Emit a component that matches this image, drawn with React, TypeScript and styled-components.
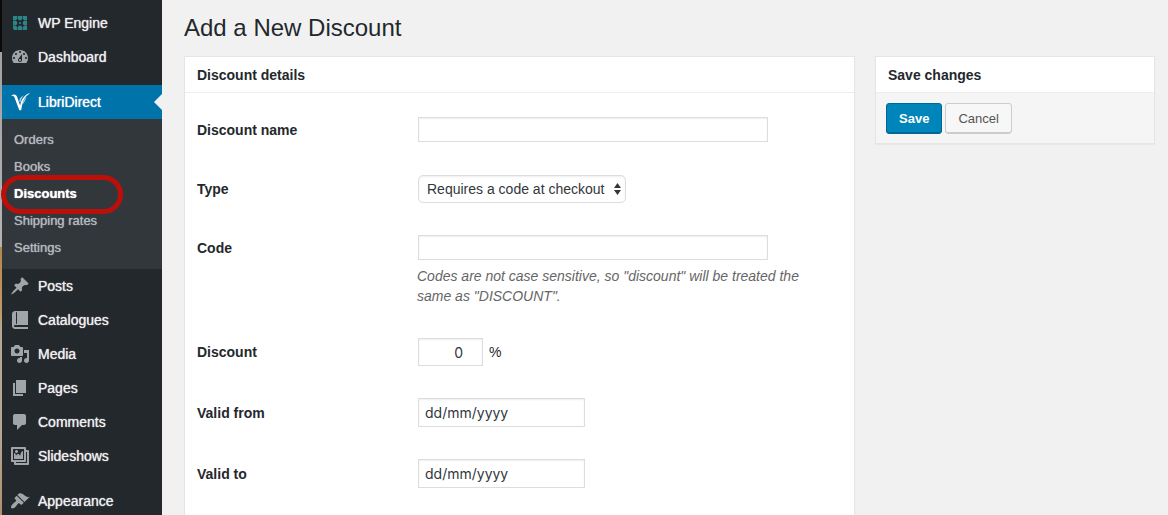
import React from 'react';
import styled, { createGlobalStyle } from 'styled-components';

const GlobalStyle = createGlobalStyle`
  *, *::before, *::after { box-sizing: border-box; }
  body {
    margin: 0;
    background: #f1f1f1;
    color: #23282d;
    font: 14px/20px "Liberation Sans", Arial, sans-serif;
  }
`;

const Shell = styled.div`
  display: flex;
  min-height: 100vh;
`;

const Backdrop = styled.div`
  flex: none;
  width: 2px;
  background: linear-gradient(#0a0a0a 52px, #a2a2a2 52px, #b4b4b4 247px, #b08850 247px, #c09a62 310px, #b5a893 330px, #b5a893 430px, #b09070 515px);
`;

const Sidebar = styled.nav`
  flex: none;
  width: 160px;
  padding-top: 6px;
  background: #23282d;
`;

const Menu = styled.ul`
  margin: 0;
  padding: 0;
  list-style: none;
`;

const MenuEntry = styled.li<{ $spaced?: boolean }>`
  margin-top: ${(p) => (p.$spaced ? 11 : 0)}px;
`;

const MenuLink = styled.a<{ $current?: boolean }>`
  position: relative;
  display: flex;
  align-items: center;
  gap: 8px;
  height: 34px;
  padding-left: 8px;
  color: ${(p) => (p.$current ? '#fff' : '#eee')};
  background: ${(p) => (p.$current ? '#0073aa' : 'transparent')};
  text-decoration: none;
  text-shadow: 0 0 1px currentColor;

  &::after {
    content: '';
    display: ${(p) => (p.$current ? 'block' : 'none')};
    position: absolute;
    right: 0;
    top: 9px;
    border: 8px solid transparent;
    border-right-color: #f1f1f1;
    border-left-width: 0;
  }
`;

const Icon = styled.svg`
  flex: none;
  width: 20px;
  height: 20px;
  fill: #a0a5aa;
`;

const Submenu = styled.ul`
  margin: 0;
  padding: 7px 0 8px;
  list-style: none;
  background: #32373c;
`;

const SubmenuEntry = styled.li`
  position: relative;
`;

const SubmenuLink = styled.a<{ $current?: boolean }>`
  display: block;
  padding-left: 12px;
  font-size: 13px;
  line-height: 27px;
  font-weight: ${(p) => (p.$current ? 700 : 400)};
  color: ${(p) => (p.$current ? '#fff' : '#b4b9be')};
  text-decoration: none;
  text-shadow: 0 0 1px currentColor;
`;

const Highlight = styled.span`
  position: absolute;
  z-index: 1;
  left: -1px;
  top: -5px;
  width: 122px;
  height: 39px;
  border: 5px solid #bb0f0a;
  border-radius: 20px;
  pointer-events: none;
`;

const Page = styled.main`
  flex: 1;
  min-width: 0;
  padding: 13px 13px 0 22px;
`;

const Title = styled.h1`
  margin: 0 0 13px;
  font-size: 24px;
  line-height: 30px;
  font-weight: 400;
`;

const Columns = styled.div`
  display: flex;
  align-items: flex-start;
  gap: 20px;
`;

const Card = styled.section<{ $side?: boolean }>`
  flex: ${(p) => (p.$side ? '0 0 280px' : '1 1 0')};
  min-width: 0;
  border: 1px solid #e5e5e5;
  background: #fff;
  box-shadow: 0 1px 1px rgba(0, 0, 0, 0.04);
`;

const CardTitle = styled.h2`
  margin: 0;
  padding: 8px 12px 7px;
  border-bottom: 1px solid #eee;
  font-size: 14px;
  line-height: 20px;
  font-weight: 700;
`;

const Form = styled.form`
  display: grid;
  gap: 32px;
  padding: 24px 12px 32px;
`;

const Row = styled.div`
  display: grid;
  grid-template-columns: 221px minmax(0, 1fr);
  align-items: center;
`;

const Label = styled.label`
  font-weight: 700;
`;

const Control = styled.div`
  display: flex;
  align-items: flex-start;
  gap: 6px;
  min-height: 26px;
`;

const Unit = styled.span`
  line-height: 28px;
`;

const TextInput = styled.input`
  width: 100%;
  max-width: 350px;
  height: 25px;
  padding: 3px 5px;
  border: 1px solid #ddd;
  background: #fff;
  box-shadow: inset 0 1px 2px rgba(0, 0, 0, 0.07);
  color: #32373c;
  font: 14px "Liberation Sans", Arial, sans-serif;
`;

const NumberInput = styled(TextInput)`
  width: 65px;
  height: 28px;
  padding-right: 19px;
  text-align: right;
  font-family: Inter, sans-serif;
`;

const DateInput = styled(TextInput)`
  width: 167px;
  height: 29px;
  padding: 3px 6px;
  font-family: Inter, sans-serif;

  &::placeholder {
    color: #32373c;
    opacity: 1;
  }
`;

const SelectBox = styled.div`
  position: relative;
  display: flex;
`;

const Select = styled.select`
  appearance: none;
  width: 208px;
  height: 28px;
  padding: 0 16px 0 8px;
  border: 1px solid #ddd;
  border-radius: 5px;
  background: #fff;
  box-shadow: inset 0 1px 2px rgba(0, 0, 0, 0.07);
  color: #32373c;
  font: 14px "Liberation Sans", Arial, sans-serif;
`;

const SelectArrows = styled.svg`
  position: absolute;
  right: 5px;
  top: 8px;
  width: 7px;
  height: 12px;
  fill: #32373c;
  pointer-events: none;
`;

const Description = styled.p`
  grid-column: 2;
  max-width: 420px;
  margin: 5px 0 0 -1px;
  color: #666;
  font-style: italic;
`;

const Actions = styled.div`
  display: flex;
  gap: 3px;
  padding: 10px 10px 9px;
  background: #f5f5f5;
`;

const Button = styled.button<{ $primary?: boolean }>`
  height: 31px;
  padding: 0 12px;
  border: 1px solid ${(p) => (p.$primary ? '#006799' : '#ccc')};
  border-radius: 3px;
  background: ${(p) => (p.$primary ? '#0085ba' : '#f7f7f7')};
  box-shadow: inset 0 -1px 0 ${(p) => (p.$primary ? '#006799' : '#ccc')};
  color: ${(p) => (p.$primary ? '#fff' : '#555')};
  font: ${(p) => (p.$primary ? 700 : 400)} 13px "Liberation Sans", Arial, sans-serif;
`;

const glyphs: Record<string, React.ReactNode> = {
  engine: (
    <g fill="#2b8488">
      <path d="M3 3h4.2v3L6 7.2H3zM7.8 3h4.4v3L11 7.2H9L7.8 6zM12.8 3H17v4.2h-3L12.8 6zM3 7.8h3L7.2 9v2L6 12.2H3zM17 7.8h-3L12.8 9v2l1.2 1.2h3zM3 12.8h3L7.2 14v3H4.2L3 15.8zM9 12.8h2l1.2 1.2v3H7.8v-3zM14 12.8h3V17h-4.2v-3z" />
      <circle cx="10" cy="10" r="1.1" />
    </g>
  ),
  dashboard: (
    <path d="M3.76 16h12.48c1.1-1.37 1.76-3.11 1.76-5 0-4.42-3.58-8-8-8s-8 3.58-8 8c0 1.89.66 3.63 1.76 5zM10 4c.55 0 1 .45 1 1s-.45 1-1 1-1-.45-1-1 .45-1 1-1zM6 6c.55 0 1 .45 1 1s-.45 1-1 1-1-.45-1-1 .45-1 1-1zm8 0c.55 0 1 .45 1 1s-.45 1-1 1-1-.45-1-1 .45-1 1-1zm-5.37 5.55L12 7v6c0 1.1-.9 2-2 2s-2-.9-2-2c0-.57.24-1.08.63-1.45zM4 10c.55 0 1 .45 1 1s-.45 1-1 1-1-.45-1-1 .45-1 1-1zm12 0c.55 0 1 .45 1 1s-.45 1-1 1-1-.45-1-1 .45-1 1-1zm-5 3c0-.55-.45-1-1-1s-1 .45-1 1 .45 1 1 1 1-.45 1-1z" />
  ),
  libri: (
    <g fill="#fff">
      <path d="M.8 4.2C2.6 1.8 6 1.6 7.2 5l2.9 8.6C11 9 13.500 3 19.600 1c-.4 1-.9 1.500-1.800 2-3.800 2.400-5.400 7.500-6.600 15.200H9.300L4.800 6.200C4 4 2.600 3.300.8 4.200z" />
      <path d="M9.200 9.500c.3-2.700 1.800-5 4.600-6.300-1.800 2-2.900 4-3.500 7.300z" opacity=".75" />
      <path d="M12.500 12.500c.5-3 1.700-5.800 4-8-.6 3.300-1.900 5.600-4 8z" opacity=".6" />
    </g>
  ),
  posts: (
    <path d="M10.44 3.02l1.82-1.82 6.36 6.35-1.83 1.82c-1.05-.68-2.48-.57-3.41.36l-.75.75c-.92.93-1.04 2.35-.35 3.41l-1.83 1.82-2.41-2.41-2.8 2.79c-.42.42-3.38 2.71-3.8 2.29s1.86-3.39 2.28-3.81l2.79-2.79L4.1 9.36l1.83-1.82c1.05.69 2.48.57 3.4-.36l.75-.75c.93-.92 1.05-2.35.36-3.41z" />
  ),
  catalogues: (
    <path d="M5 17h13v2H5c-1.66 0-3-1.34-3-3V4c0-1.66 1.34-3 3-3h13v14H5c-.55 0-1 .45-1 1s.45 1 1 1zm2-3.5v-11c0-.28-.22-.5-.5-.5s-.5.22-.5.5v11c0 .28.22.5.5.5s.5-.22.5-.5z" />
  ),
  media: (
    <path d="M13 11V4c0-.55-.45-1-1-1h-1.67L9 1H5L3.67 3H2c-.55 0-1 .45-1 1v7c0 .55.45 1 1 1h10c.55 0 1-.45 1-1zM7 4.5c1.38 0 2.5 1.12 2.5 2.5S8.38 9.5 7 9.5 4.5 8.38 4.5 7 5.62 4.5 7 4.5zM14 6h5v10.5c0 1.38-1.12 2.5-2.5 2.5S14 17.88 14 16.5s1.12-2.5 2.5-2.5c.17 0 .34.02.5.05V9h-3V6zm-4 8.05V13h2v3.5c0 1.38-1.12 2.5-2.5 2.5S7 17.88 7 16.5 8.12 14 9.5 14c.17 0 .34.02.5.05z" />
  ),
  pages: <path d="M6 15V2h10v13H6zm-1 1h8v2H3V5h2v11z" />,
  comments: (
    <path d="M5 2h9c1.1 0 2 .9 2 2v7c0 1.1-.9 2-2 2h-2l-5 5v-5H5c-1.1 0-2-.9-2-2V4c0-1.1.9-2 2-2z" />
  ),
  slideshows: (
    <path d="M16 4h1.96c.57 0 1.04.47 1.04 1.04v12.92c0 .57-.47 1.04-1.04 1.04H5.04C4.47 19 4 18.53 4 17.96V16H2.04C1.47 16 1 15.53 1 14.96V2.04C1 1.47 1.47 1 2.04 1h12.92c.57 0 1.04.47 1.04 1.04V4zM3 14h11V3H3v11zm5-8.5C8 4.67 7.33 4 6.5 4S5 4.67 5 5.5 5.67 7 6.5 7 8 6.33 8 5.5zm2 4.5s1-5 3-5v8H4V7c2 0 2 3 2 3s.33-2 2-2 2 2 2 2zm7 7V6h-1v8.96c0 .57-.47 1.04-1.04 1.04H6v1h11z" />
  ),
  appearance: (
    <path d="M14.48 11.06L7.41 3.99l1.5-1.5c.5-.56 2.3-.47 3.51.32 1.21.8 1.43 1.28 2.91 2.1 1.18.64 2.45 1.26 4.45.85zm-.71.71L6.7 4.7 4.93 6.47c-.39.39-.39 1.02 0 1.41l1.06 1.06c.39.39.39 1.03 0 1.42-.6.6-1.43 1.11-2.21 1.69-.35.26-.7.53-1.01.84C1.43 14.23.4 16.08 1.4 17.07c.99 1 2.84-.03 4.18-1.36.31-.31.58-.66.85-1.02.57-.78 1.08-1.61 1.69-2.21.39-.39 1.02-.39 1.41 0l1.06 1.06c.39.39 1.02.39 1.41 0z" />
  ),
};

type Item = { label: string; icon: string; spaced?: boolean; children?: string[] };

const items: Item[] = [
  { label: 'WP Engine', icon: 'engine' },
  { label: 'Dashboard', icon: 'dashboard' },
  {
    label: 'LibriDirect',
    icon: 'libri',
    spaced: true,
    children: ['Orders', 'Books', 'Discounts', 'Shipping rates', 'Settings'],
  },
  { label: 'Posts', icon: 'posts' },
  { label: 'Catalogues', icon: 'catalogues' },
  { label: 'Media', icon: 'media' },
  { label: 'Pages', icon: 'pages' },
  { label: 'Comments', icon: 'comments' },
  { label: 'Slideshows', icon: 'slideshows' },
  { label: 'Appearance', icon: 'appearance', spaced: true },
];

export default function App() {
  return (
    <Shell>
      <GlobalStyle />
      <Backdrop />
      <Sidebar>
        <Menu>
          {items.map((item) => (
            <MenuEntry key={item.label} $spaced={item.spaced}>
              <MenuLink href="#" $current={!!item.children}>
                <Icon viewBox="0 0 20 20" aria-hidden="true">{glyphs[item.icon]}</Icon>
                {item.label}
              </MenuLink>
              {item.children && (
                <Submenu>
                  {item.children.map((child) => (
                    <SubmenuEntry key={child}>
                      <SubmenuLink href="#" $current={child === 'Discounts'}>{child}</SubmenuLink>
                      {child === 'Discounts' && <Highlight />}
                    </SubmenuEntry>
                  ))}
                </Submenu>
              )}
            </MenuEntry>
          ))}
        </Menu>
      </Sidebar>
      <Page>
        <Title>Add a New Discount</Title>
        <Columns>
          <Card>
            <CardTitle>Discount details</CardTitle>
            <Form id="discount">
              <Row>
                <Label htmlFor="name">Discount name</Label>
                <Control><TextInput id="name" type="text" /></Control>
              </Row>
              <Row>
                <Label htmlFor="type">Type</Label>
                <Control>
                  <SelectBox>
                    <Select id="type">
                      <option>Requires a code at checkout</option>
                    </Select>
                    <SelectArrows viewBox="0 0 7 12" aria-hidden="true">
                      <path d="M3.5 0L7 5H0zM3.5 12L0 7h7z" />
                    </SelectArrows>
                  </SelectBox>
                </Control>
              </Row>
              <Row>
                <Label htmlFor="code">Code</Label>
                <Control><TextInput id="code" type="text" /></Control>
                <Description>
                  Codes are not case sensitive, so "discount" will be treated the same as "DISCOUNT".
                </Description>
              </Row>
              <Row>
                <Label htmlFor="amount">Discount</Label>
                <Control>
                  <NumberInput id="amount" type="text" inputMode="numeric" defaultValue="0" />
                  <Unit>%</Unit>
                </Control>
              </Row>
              <Row>
                <Label htmlFor="from">Valid from</Label>
                <Control><DateInput id="from" type="text" placeholder="dd/mm/yyyy" /></Control>
              </Row>
              <Row>
                <Label htmlFor="to">Valid to</Label>
                <Control><DateInput id="to" type="text" placeholder="dd/mm/yyyy" /></Control>
              </Row>
            </Form>
          </Card>
          <Card $side>
            <CardTitle>Save changes</CardTitle>
            <Actions>
              <Button $primary type="submit" form="discount">Save</Button>
              <Button type="button">Cancel</Button>
            </Actions>
          </Card>
        </Columns>
      </Page>
    </Shell>
  );
}
